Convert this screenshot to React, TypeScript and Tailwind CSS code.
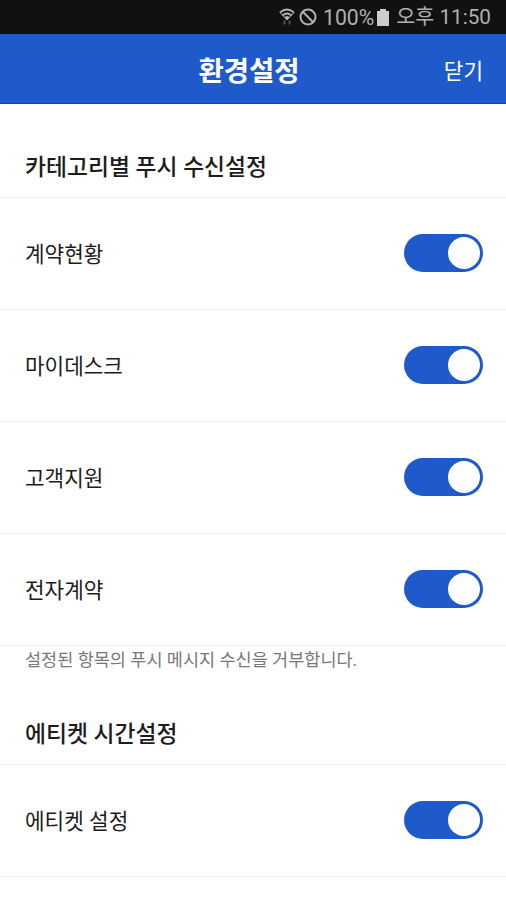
import { useState } from 'react';

interface ToggleProps {
  label: string;
  checked: boolean;
  onChange: () => void;
}

function Toggle({ label, checked, onChange }: ToggleProps) {
  return (
    <button
      role="switch"
      aria-checked={checked}
      aria-label={label}
      onClick={onChange}
      className={`mb-px flex h-[38px] w-[79px] items-center rounded-full px-[3px] ${checked ? 'justify-end bg-[#1f5acb]' : 'justify-start bg-gray-300'}`}
    >
      <span className="h-8 w-8 rounded-full bg-white" />
    </button>
  );
}

function StatusBar() {
  return (
    <div className="flex h-[34px] items-center justify-end bg-[#111111] pr-[15px] text-[20.7px] whitespace-nowrap text-[#b0b0b0]">
      <svg width="16" height="18" viewBox="0 0 16 18" fill="none" stroke="currentColor">
        <path d="M1 4.500Q8-1.500 15 4.500M3.500 7.500Q8 3.500 12.500 7.500" strokeWidth="1.700" />
        <path d="M1 4.500L8 12L15 4.500" strokeWidth="1" />
        <path d="M5.500 9.500Q8 7.500 10.500 9.500L8 12z" fill="currentColor" />
        <path d="M5.500 12.500v4M10.500 12.500v4" stroke="#555555" strokeWidth="1.800" />
      </svg>
      <svg width="18" height="18" viewBox="0 0 18 18" fill="none" stroke="currentColor" strokeWidth="2" className="ml-1">
        <circle cx="9" cy="9" r="7.500" />
        <path d="M4 4l10 10" />
      </svg>
      <span className="ml-[6px] pt-[2px] text-[21.2px]">100%</span>
      <svg width="12" height="17" viewBox="0 0 12 17" fill="#cccccc" className="ml-[3px]">
        <path d="M3 0h6v2h3v15H0V2h3z" />
      </svg>
      <span className="ml-[7px] pt-[2px]">오후 11:50</span>
    </div>
  );
}

const categories = ['계약현황', '마이데스크', '고객지원', '전자계약'];

export default function App() {
  const [off, setOff] = useState<string[]>([]);

  function toggle(name: string) {
    setOff(off.includes(name) ? off.filter(n => n !== name) : [...off, name]);
  }

  return (
    <div className="h-[900px] w-[506px] overflow-hidden bg-white font-[Roboto,'Noto_Sans_CJK_KR',sans-serif] text-[#1c1c1c]">
      <StatusBar />
      <header className="grid h-[70px] grid-cols-[1fr_auto_1fr] items-center border-b border-[#0f45b8] bg-[#1f5acb] pt-[6px] pr-[23px] pl-[15px] text-white">
        <h1 className="col-start-2 text-[27.5px] leading-9 font-bold tracking-[-0.1px]">환경설정</h1>
        <button className="justify-self-end text-[21.3px] leading-9">닫기</button>
      </header>

      <h2 className="flex h-[94px] items-end border-b border-[#f1f1f1] px-[25px] pb-[11px] text-[22.8px] leading-9 font-medium">카테고리별 푸시 수신설정</h2>
      {categories.map(name => (
        <div key={name} className="flex h-[112px] items-center justify-between border-b border-[#f1f1f1] pr-[23px] pl-[25px]">
          <span className="pt-[3px] text-[21.3px]">{name}</span>
          <Toggle label={name} checked={!off.includes(name)} onChange={() => toggle(name)} />
        </div>
      ))}
      <p className="h-[58px] px-[25px] pt-[2px] text-[17.5px] leading-6 text-[#777777]">설정된 항목의 푸시 메시지 수신을 거부합니다.</p>

      <h2 className="flex h-[61px] items-center border-b border-[#f1f1f1] px-[25px] pt-[2px] text-[22.8px] font-medium">에티켓 시간설정</h2>
      <div className="flex h-[112px] items-center justify-between border-b border-[#f1f1f1] pr-[23px] pl-[25px]">
        <span className="pt-[3px] text-[21.3px]">에티켓 설정</span>
        <Toggle label="에티켓 설정" checked={!off.includes('에티켓 설정')} onChange={() => toggle('에티켓 설정')} />
      </div>
    </div>
  );
}
